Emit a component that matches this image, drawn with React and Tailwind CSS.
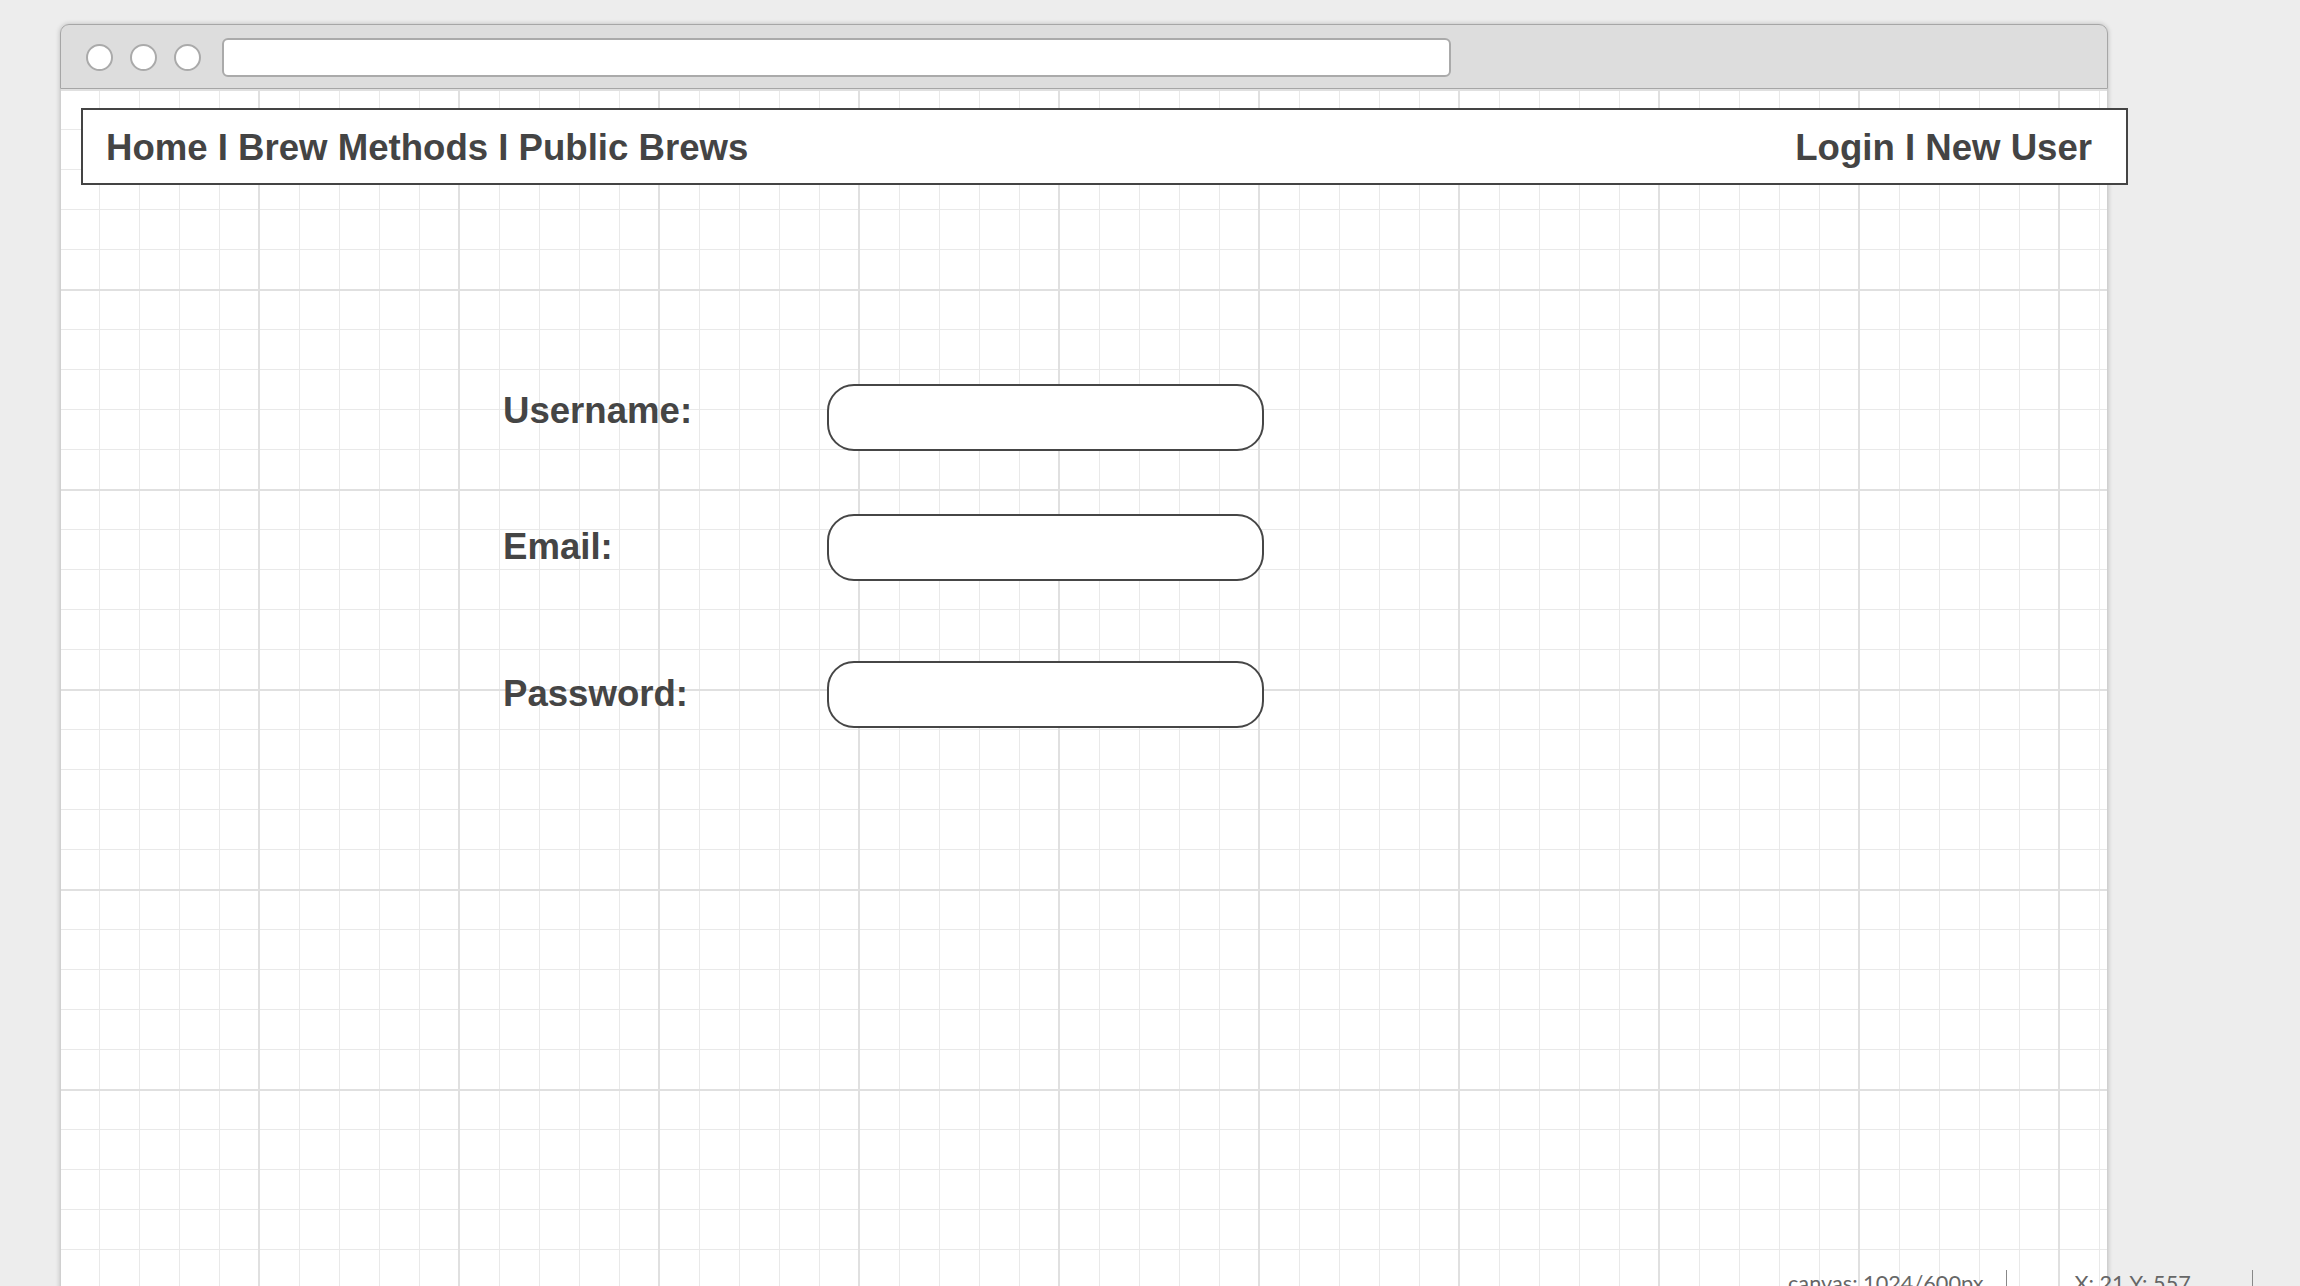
import React from "react";

function Field({ label, labelClass = "", className = "" }) {
  return (
    <div className={"flex items-center ml-[442px] " + className}>
      <div className={"w-[324px] text-[36.6px] font-bold text-[#454545] leading-none " + labelClass}>{label}</div>
      <div className="w-[437px] h-[67px] rounded-[27px] border-2 border-[#464646] bg-white" />
    </div>
  );
}

export default function App() {
  return (
    <div className="relative w-[2300px] h-[1286px] overflow-hidden bg-[#ededed] font-['Liberation_Sans',Arial,sans-serif]">
      <div className="ml-[60px] pt-[24px] w-[2048px]">
        <div className="h-[1300px] rounded-t-[9px] shadow-[0_0_5px_rgba(0,0,0,0.22)] flex flex-col">
          {/* title bar */}
          <div className="h-[65px] shrink-0 rounded-t-[9px] border border-[#a6a6a6] bg-[#dddddd] flex items-start pl-[25px]">
            <div className="mt-[19px] w-[27px] h-[27px] rounded-full border-2 border-[#aaaaaa] bg-white" />
            <div className="mt-[19px] ml-[17px] w-[27px] h-[27px] rounded-full border-2 border-[#aaaaaa] bg-white" />
            <div className="mt-[19px] ml-[17px] w-[27px] h-[27px] rounded-full border-2 border-[#aaaaaa] bg-white" />
            <div className="mt-[13px] ml-[21px] w-[1229px] h-[39px] rounded-[6px] border-2 border-[#aaaaaa] bg-white" />
          </div>
          {/* canvas */}
          <div className="flex-1 border-x border-[#d0d0d0] bg-white bg-[linear-gradient(to_right,#e0e0e0_2px,transparent_2px),linear-gradient(to_bottom,#e0e0e0_2px,transparent_2px),linear-gradient(to_right,#e9e9e9_1px,transparent_1px),linear-gradient(to_bottom,#e9e9e9_1px,transparent_1px)] bg-[size:200px_200px,200px_200px,40px_40px,40px_40px] bg-[position:-3px_0,0_0,-2px_0,0_0] pt-[19px]">
            <div className="ml-[20px] w-[2047px] h-[77px] border-2 border-[#444444] bg-white flex items-center justify-between pl-[23px] pr-[34px] pt-[4px] text-[36.6px] font-bold text-[#444444] leading-none">
              <span>Home I Brew Methods I Public Brews</span>
              <span>Login I New User</span>
            </div>
            <Field label="Username:" labelClass="pb-[12px]" className="mt-[199px]" />
            <Field label="Email:" className="mt-[63px]" />
            <Field label="Password:" className="mt-[80px]" />
          </div>
        </div>
      </div>
      {/* status bar overlay */}
      <div className="absolute left-[1788px] top-[1270px] flex items-start text-[21.7px] text-[#666666] font-['Lato',sans-serif] leading-none">
        <span className="mt-[3px]">canvas: 1024/600px</span>
        <span className="ml-[23px] w-px h-[30px] bg-[#888888]" />
        <span className="ml-[67px] mt-[3px]">X: 21 Y: 557</span>
        <span className="ml-[61px] w-px h-[30px] bg-[#888888]" />
      </div>
    </div>
  );
}
